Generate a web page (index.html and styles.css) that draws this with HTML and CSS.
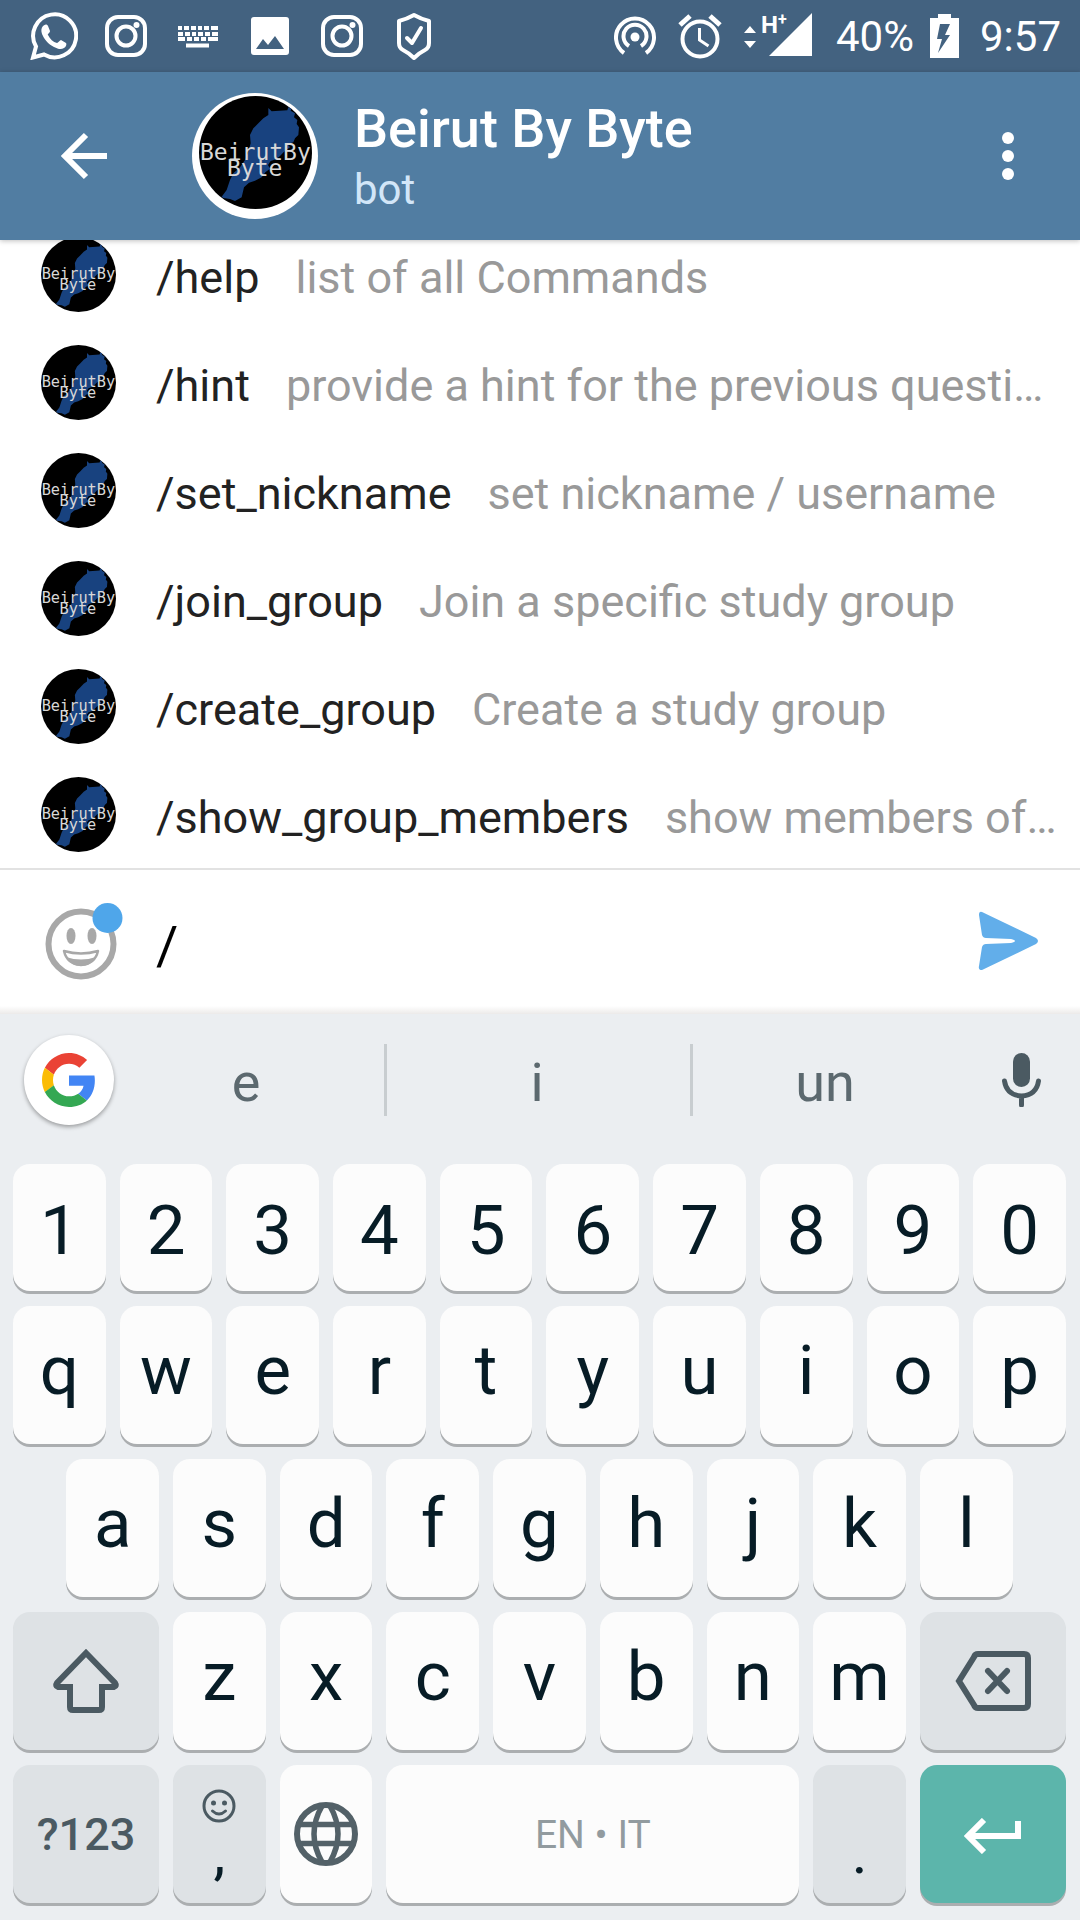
FILE: index.html
```html
<!DOCTYPE html>
<html lang="en">
<head>
<meta charset="utf-8">
<meta name="viewport" content="width=device-width, initial-scale=1">
<title>Beirut By Byte</title>
<link rel="stylesheet" href="styles.css">
</head>
<body>
<svg class="defs" aria-hidden="true">
  <symbol id="logo" viewBox="57 48 339 339">
    <rect x="57" y="48" width="339" height="339" fill="#000"/>
    <path fill="#18427f" d="M265 84L275 94 322 91 325 82 335 84 332 92 345 100 342 112 352 120 350 132 357 142 355 165 345 175 340 187 322 192 330 202 312 215 300 228 288 238 272 243 264 255 270 266 256 277 245 292 225 302 207 308 192 322 185 352 165 363 150 357 130 354 125 350 140 330 150 300 160 280 180 262 195 240 205 215 212 190 210 165 220 145 235 130 250 115 265 105z"/>
  </symbol>
  <symbol id="instagram" viewBox="0 0 48 48">
    <rect x="5" y="5" width="38" height="38" rx="11" fill="none" stroke="#fff" stroke-width="4"/>
    <circle cx="24" cy="24" r="9.500" fill="none" stroke="#fff" stroke-width="4"/>
    <circle cx="34.500" cy="13" r="3" fill="#fff"/>
  </symbol>
</svg>

<div class="phone">
  <div class="status">
    <div class="status-group notices">
      <svg class="icon" viewBox="0 0 48 48"><path d="M3 45.500l3-11a21.500 21.500 0 1 1 8 8z" fill="none" stroke="#fff" stroke-width="4"/><path d="M13 14c2-2 4-2 5 0l2 5c0 2-3 3-2 4 2 4 5 7 9 8 1 0 3-3 4-3l5 3c1 1 0 4-2 5-3 2-6 1-10-1-6-3-10-8-12-13-1-3-1-6 1-8z" fill="#fff"/></svg>
      <svg class="icon"><use href="#instagram"/></svg>
      <svg class="icon" viewBox="0 0 48 48" fill="none" stroke="#fff"><path d="M4 16h40" stroke-width="4" stroke-dasharray="4 2 5 2 5 2 4 2 5 2 7"/><path d="M4 22h40" stroke-width="4" stroke-dasharray="5 2 5 2 4 2 5 2 5 2 6"/><path d="M4 27h40" stroke-width="4" stroke-dasharray="7 2 5 2 5 2 5 2 10"/><path d="M12 33.500h23" stroke-width="4"/></svg>
      <svg class="icon" viewBox="0 0 48 48"><path fill="#fff" fill-rule="evenodd" d="M8 5h32q3 0 3 3v32q0 3-3 3H8q-3 0-3-3V8q0-3 3-3zm2 32h28l-9-13-7 9-5-6z"/></svg>
      <svg class="icon"><use href="#instagram"/></svg>
      <svg class="icon" viewBox="0 0 48 48" fill="none" stroke="#fff" stroke-width="4" stroke-linejoin="round" stroke-linecap="round"><path d="M24 3q7 4 15 6v22q0 5-4 7-6 3-11 8-5-5-11-8-4-2-4-7V9q8-2 15-6z"/><path d="M17 26l5 5 9-15"/></svg>
    </div>
    <div class="status-group">
      <svg class="icon" viewBox="1 0 48 48" fill="none" stroke="#fff" stroke-width="4"><path d="M11 41a19 19 0 1 1 22 0M16 34a11.500 11.500 0 1 1 12 0"/><circle cx="22" cy="25" r="4.500" fill="#fff" stroke="none"/></svg>
      <svg class="icon" viewBox="0 0 48 48" fill="none" stroke="#fff" stroke-width="4"><circle cx="22" cy="27" r="17.500"/><path d="M2 13l10-9M32 4l10 9" stroke-width="5"/><path d="M21.500 16v12l9 6" stroke-width="3"/></svg>
      <svg class="signal" viewBox="0 0 78 48"><path fill="#fff" d="M2 21l6-7 6 7zM2 29h12l-6 7zM27 44L70 1v43z"/><text x="19" y="21" class="net">H</text><text x="36" y="13" class="net plus">+</text></svg>
      <span>40%</span>
      <svg class="battery" viewBox="0 0 34 48"><path fill="#fff" fill-rule="evenodd" d="M8 2h13v4h8v40H0V6h8zM10 12L7 27h5L8 41 20 23h-5l5-11z"/></svg>
      <span>9:57</span>
    </div>
  </div>

  <header class="topbar">
    <button class="back" aria-label="Back"><svg viewBox="0 0 48 48" fill="none" stroke="#fff" stroke-width="6"><path d="M47 24H5M26 3L5 24l21 21"/></svg></button>
    <span class="portrait"><svg class="portrait-logo" viewBox="0 0 113 113"><use href="#logo"/><text x="1" y="64" class="logo-text">BeirutBy</text><text x="28" y="80" class="logo-text">Byte</text></svg></span>
    <div class="heading"><h1>Beirut By Byte</h1><p>bot</p></div>
    <button class="more" aria-label="More options"><svg viewBox="0 0 12 48" fill="#fff"><circle cx="6" cy="6" r="6"/><circle cx="6" cy="24" r="6"/><circle cx="6" cy="42" r="6"/></svg></button>
  </header>

  <ul class="commands">
    <li><button class="command"><svg class="avatar" viewBox="0 0 113 113"><use href="#logo"/><text x="1" y="64" class="logo-text">BeirutBy</text><text x="28" y="80" class="logo-text">Byte</text></svg><span class="name">/help</span><span class="about">list of all Commands</span></button></li>
    <li><button class="command"><svg class="avatar" viewBox="0 0 113 113"><use href="#logo"/><text x="1" y="64" class="logo-text">BeirutBy</text><text x="28" y="80" class="logo-text">Byte</text></svg><span class="name">/hint</span><span class="about">provide a hint for the previous question</span></button></li>
    <li><button class="command"><svg class="avatar" viewBox="0 0 113 113"><use href="#logo"/><text x="1" y="64" class="logo-text">BeirutBy</text><text x="28" y="80" class="logo-text">Byte</text></svg><span class="name">/set_nickname</span><span class="about">set nickname / username</span></button></li>
    <li><button class="command"><svg class="avatar" viewBox="0 0 113 113"><use href="#logo"/><text x="1" y="64" class="logo-text">BeirutBy</text><text x="28" y="80" class="logo-text">Byte</text></svg><span class="name">/join_group</span><span class="about">Join a specific study group</span></button></li>
    <li><button class="command"><svg class="avatar" viewBox="0 0 113 113"><use href="#logo"/><text x="1" y="64" class="logo-text">BeirutBy</text><text x="28" y="80" class="logo-text">Byte</text></svg><span class="name">/create_group</span><span class="about">Create a study group</span></button></li>
    <li><button class="command"><svg class="avatar" viewBox="0 0 113 113"><use href="#logo"/><text x="1" y="64" class="logo-text">BeirutBy</text><text x="28" y="80" class="logo-text">Byte</text></svg><span class="name">/show_group_members</span><span class="about">show members of a group</span></button></li>
  </ul>

  <form class="composer">
    <button class="emoji" type="button" aria-label="Emoji"><svg viewBox="0 0 78 78"><g fill="none" stroke="#a8a8a8"><circle cx="36" cy="42" r="32.500" stroke-width="6"/><path d="M19 49q17 5 34 0-3 13-17 14-14-1-17-14z" stroke-width="2.500" stroke-linejoin="round"/></g><g fill="#a8a8a8"><ellipse cx="26" cy="34" rx="4.500" ry="8"/><ellipse cx="47" cy="34" rx="4.500" ry="8"/><path d="M21 55q15 5 30 0-5 9-15 9t-15-9z"/></g><circle cx="62.500" cy="16" r="15" fill="#4fa6ea"/></svg></button>
    <input class="message" type="text" value="/" aria-label="Message">
    <button class="send" type="button" aria-label="Send"><svg viewBox="0 0 60 60"><path fill="#62aeea" d="M4 1l54 26q4 3 0 6L4 59q-4 0-3-4l3-19q1-3 4-3l25-1q4-1 4-2t-4-2L8 27q-3 0-4-3L1 4q0-4 3-3z"/></svg></button>
  </form>

  <section class="keyboard" aria-label="Keyboard">
    <div class="suggestions">
      <button class="google" aria-label="Google search"><svg viewBox="0 0 48 48"><path fill="#ea4335" d="M24 9.500c3.540 0 6.710 1.220 9.210 3.600l6.850-6.850C35.900 2.380 30.470 0 24 0 14.620 0 6.510 5.380 2.560 13.220l7.980 6.190C12.430 13.720 17.740 9.500 24 9.500z"/><path fill="#4285f4" d="M46.980 24.550c0-1.570-.15-3.090-.38-4.550H24v9.020h12.940c-.58 2.960-2.260 5.480-4.780 7.180l7.730 6c4.510-4.180 7.090-10.360 7.090-17.650z"/><path fill="#fbbc05" d="M10.530 28.590c-.48-1.450-.76-2.990-.76-4.590s.27-3.140.76-4.590l-7.980-6.190C.92 16.460 0 20.120 0 24s.92 7.540 2.560 10.780l7.970-6.190z"/><path fill="#34a853" d="M24 48c6.480 0 11.930-2.130 15.890-5.810l-7.730-6c-2.150 1.450-4.920 2.300-8.160 2.300-6.260 0-11.570-4.220-13.470-9.910l-7.980 6.190C6.510 42.620 14.620 48 24 48z"/></svg></button>
      <button class="suggestion">e</button>
      <button class="suggestion">i</button>
      <button class="suggestion">un</button>
      <button class="mic" aria-label="Voice input"><svg viewBox="0 0 40 54"><rect x="11" width="17" height="34" rx="8.500" fill="#4b5a62"/><path d="M2.500 28q2 14 17 15 15-1 17-15M19.500 43v9" fill="none" stroke="#4b5a62" stroke-width="5" stroke-linecap="round"/></svg></button>
    </div>
    <div class="row digits">
      <button class="key">1</button><button class="key">2</button><button class="key">3</button><button class="key">4</button><button class="key">5</button><button class="key">6</button><button class="key">7</button><button class="key">8</button><button class="key">9</button><button class="key">0</button>
    </div>
    <div class="row">
      <button class="key">q</button><button class="key">w</button><button class="key">e</button><button class="key">r</button><button class="key">t</button><button class="key">y</button><button class="key">u</button><button class="key">i</button><button class="key">o</button><button class="key">p</button>
    </div>
    <div class="row inset">
      <button class="key">a</button><button class="key">s</button><button class="key">d</button><button class="key">f</button><button class="key">g</button><button class="key">h</button><button class="key">j</button><button class="key">k</button><button class="key">l</button>
    </div>
    <div class="row">
      <button class="key wide tool" aria-label="Shift"><svg class="shift-icon" viewBox="0 0 68 66" fill="none" stroke="#4b5a62" stroke-width="6"><path d="M34 5l29 30q2 3-1 4H50v20q0 3-3 3H21q-3 0-3-3V39H6q-3-1-1-4z"/></svg></button>
      <button class="key">z</button><button class="key">x</button><button class="key">c</button><button class="key">v</button><button class="key">b</button><button class="key">n</button><button class="key">m</button>
      <button class="key wide tool" aria-label="Backspace"><svg class="backspace-icon" viewBox="0 0 76 60" fill="none" stroke="#4b5a62" stroke-width="6"><path d="M23 3h46q4 0 4 4v46q0 4-4 4H23q-3 0-4-3L4 30 19 6q1-3 4-3z"/><path d="M33 20l19 20M52 20L33 40" stroke-linecap="round"/></svg></button>
    </div>
    <div class="row">
      <button class="key wide tool mode">?123</button>
      <button class="key tool stacked" aria-label="Comma, emoji"><svg class="smile-icon" viewBox="0 0 34 34" fill="none" stroke="#4b5a62"><circle cx="17" cy="17" r="15" stroke-width="3"/><path d="M10.500 22q6.500 6 13 0" stroke-width="3" stroke-linecap="round"/><g fill="#4b5a62" stroke="none"><circle cx="11.500" cy="14" r="2.500"/><circle cx="22.500" cy="14" r="2.500"/></g></svg><span>,</span></button>
      <button class="key tool-white" aria-label="Language"><svg class="globe-icon" viewBox="0 0 64 64" fill="none" stroke="#536168" stroke-width="6"><circle cx="32" cy="32" r="29"/><path d="M6 22.500h52M6 41.500h52M28 4q-16 28 0 56M36 4q16 28 0 56" stroke-width="5.500"/></svg></button>
      <button class="key space">EN • IT</button>
      <button class="key tool stacked"><span>.</span></button>
      <button class="key wide enter" aria-label="Enter"><svg class="enter-icon" viewBox="0 0 58 36" fill="none" stroke="#fff" stroke-width="6"><path d="M54 3v15H5M20 2L4 18l16 16"/></svg></button>
    </div>
  </section>
</div>
</body>
</html>
```
FILE: styles.css
```css
* {
  box-sizing: border-box;
}

body {
  margin: 0;
  background: #fff;
  font-family: Roboto, "Liberation Sans", sans-serif;
}

button {
  display: flex;
  align-items: center;
  justify-content: center;
  padding: 0;
  border: 0;
  background: none;
  color: inherit;
  font: inherit;
}

svg {
  display: block;
  flex: none;
}

.defs {
  display: none;
}

.phone {
  display: flex;
  flex-direction: column;
  height: 100vh;
}

/* Status bar */
.status {
  display: flex;
  flex: none;
  align-items: center;
  justify-content: space-between;
  height: 72px;
  padding: 0 19px 0 30px;
  background: #436280;
  color: #fff;
  font-size: 42px;
}

.status-group {
  display: flex;
  align-items: center;
  gap: 16px;
}

.notices {
  gap: 24px;
}

.icon {
  width: 48px;
  height: 48px;
}

.signal {
  width: 78px;
  height: 48px;
  overflow: visible;
}

.battery {
  width: 34px;
  height: 48px;
}

.net {
  fill: #fff;
  font-size: 24px;
  font-weight: 700;
}

.net.plus {
  font-size: 16px;
}

/* Chat header */
.topbar {
  z-index: 1;
  display: flex;
  flex: none;
  align-items: center;
  height: 168px;
  background: #517da2;
  box-shadow: 0 1px 5px rgba(0, 0, 0, 0.25);
  color: #fff;
}

.back {
  width: 168px;
  height: 168px;
}

.back svg {
  width: 48px;
  height: 48px;
}

.portrait {
  display: flex;
  justify-content: center;
  width: 126px;
  height: 126px;
  margin: 0 36px 0 24px;
  padding-top: 3px;
  border-radius: 50%;
  background: #fff;
}

.portrait-logo {
  width: 113px;
  height: 113px;
  border-radius: 50%;
}

.logo-text {
  fill: #d8d8d8;
  font-family: "DejaVu Sans Mono", monospace;
  font-size: 23px;
}

.heading {
  flex: 1;
  padding-top: 3px;
}

.heading h1 {
  margin: 0;
  font-size: 54px;
  font-weight: 500;
  line-height: 64px;
}

.heading p {
  margin: 0;
  color: #d2e6f8;
  font-size: 42px;
  line-height: 58px;
}

.more {
  width: 144px;
  height: 168px;
}

.more svg {
  width: 12px;
  height: 48px;
}

/* Command list, scrolled to its end */
.commands {
  display: flex;
  flex: 1;
  flex-direction: column;
  justify-content: flex-end;
  min-height: 0;
  margin: 0;
  padding: 0;
  overflow: hidden;
  list-style: none;
}

.command {
  justify-content: flex-start;
  width: 100%;
  height: 108px;
  padding: 0 18px 0 41px;
  font-size: 45px;
  line-height: 60px;
  text-align: left;
}

.avatar {
  width: 75px;
  height: 75px;
  margin-right: 40px;
  border-radius: 50%;
}

.name {
  flex: none;
  margin-right: 36px;
  padding-top: 8px;
  color: #222;
}

.about {
  min-width: 0;
  padding-top: 8px;
  overflow: hidden;
  color: #999;
  text-overflow: ellipsis;
  white-space: nowrap;
}

/* Message field */
.composer {
  display: flex;
  flex: none;
  align-items: center;
  height: 146px;
  padding: 0 42px 2px 45px;
  border-top: 2px solid #e2e2e2;
  background: linear-gradient(to top, #eceae9, #fff 8px);
}

.emoji svg {
  width: 78px;
  height: 78px;
}

.message {
  flex: 1;
  min-width: 0;
  margin: 0 24px 0 33px;
  padding: 8px 0 0;
  border: 0;
  outline: 0;
  background: none;
  color: #000;
  font: inherit;
  font-size: 54px;
}

.send svg {
  width: 60px;
  height: 60px;
}

/* Keyboard */
.keyboard {
  display: flex;
  flex: none;
  flex-direction: column;
  gap: 15px;
  padding: 21px 7px 17px 6px;
  background: #ebeef1;
  color: #071c26;
  font-size: 69px;
}

.suggestions {
  display: grid;
  grid-template-columns: 102px 276fr 306fr 270fr 113px;
  align-items: center;
  height: 90px;
  margin-bottom: 24px;
  color: #5c696f;
  font-size: 54px;
}

.google {
  width: 90px;
  height: 90px;
  margin-left: 18px;
  border-radius: 50%;
  background: #fff;
  box-shadow: 0 2px 4px rgba(0, 0, 0, 0.35);
}

.google svg {
  width: 54px;
  height: 54px;
}

.suggestion {
  height: 72px;
  padding-top: 4px;
}

.suggestion + .suggestion {
  padding-right: 3px;
  border-left: 3px solid #c8cdd0;
}

.mic {
  padding-left: 10px;
}

.mic svg {
  width: 40px;
  height: 54px;
}

.row {
  display: grid;
  grid-template-columns: repeat(20, 1fr);
  grid-auto-rows: 138px;
}

.digits {
  grid-auto-rows: 127px;
}

.key {
  grid-column: span 2;
  margin: 0 7px;
  padding-bottom: 10px;
  border-radius: 17px;
  background: #fcfcfc;
  box-shadow: 0 3px 0 #abaeb0;
}

.digits .key {
  padding: 6px 0 0;
}

.inset .key:first-child {
  grid-column: 2 / span 2;
}

.key.wide {
  grid-column: span 3;
}

.key.tool {
  padding: 0;
  background: #dee2e5;
}

.key.tool-white {
  padding: 0;
}

.key.mode {
  color: #4b5a62;
  font-size: 45px;
  font-weight: 500;
}

.key.stacked {
  flex-direction: column;
  justify-content: flex-end;
  padding-bottom: 20px;
  font-size: 60px;
  line-height: 60px;
}

.key.space {
  grid-column: span 8;
  padding: 2px 0 0;
  color: #929b9f;
  font-size: 39px;
}

.key.enter {
  padding: 4px 0 0;
  background: #5cb5ab;
}

.shift-icon {
  width: 68px;
  height: 66px;
}

.backspace-icon {
  width: 76px;
  height: 60px;
}

.smile-icon {
  width: 34px;
  height: 34px;
}

.globe-icon {
  width: 64px;
  height: 64px;
}

.enter-icon {
  width: 58px;
  height: 36px;
}
```
